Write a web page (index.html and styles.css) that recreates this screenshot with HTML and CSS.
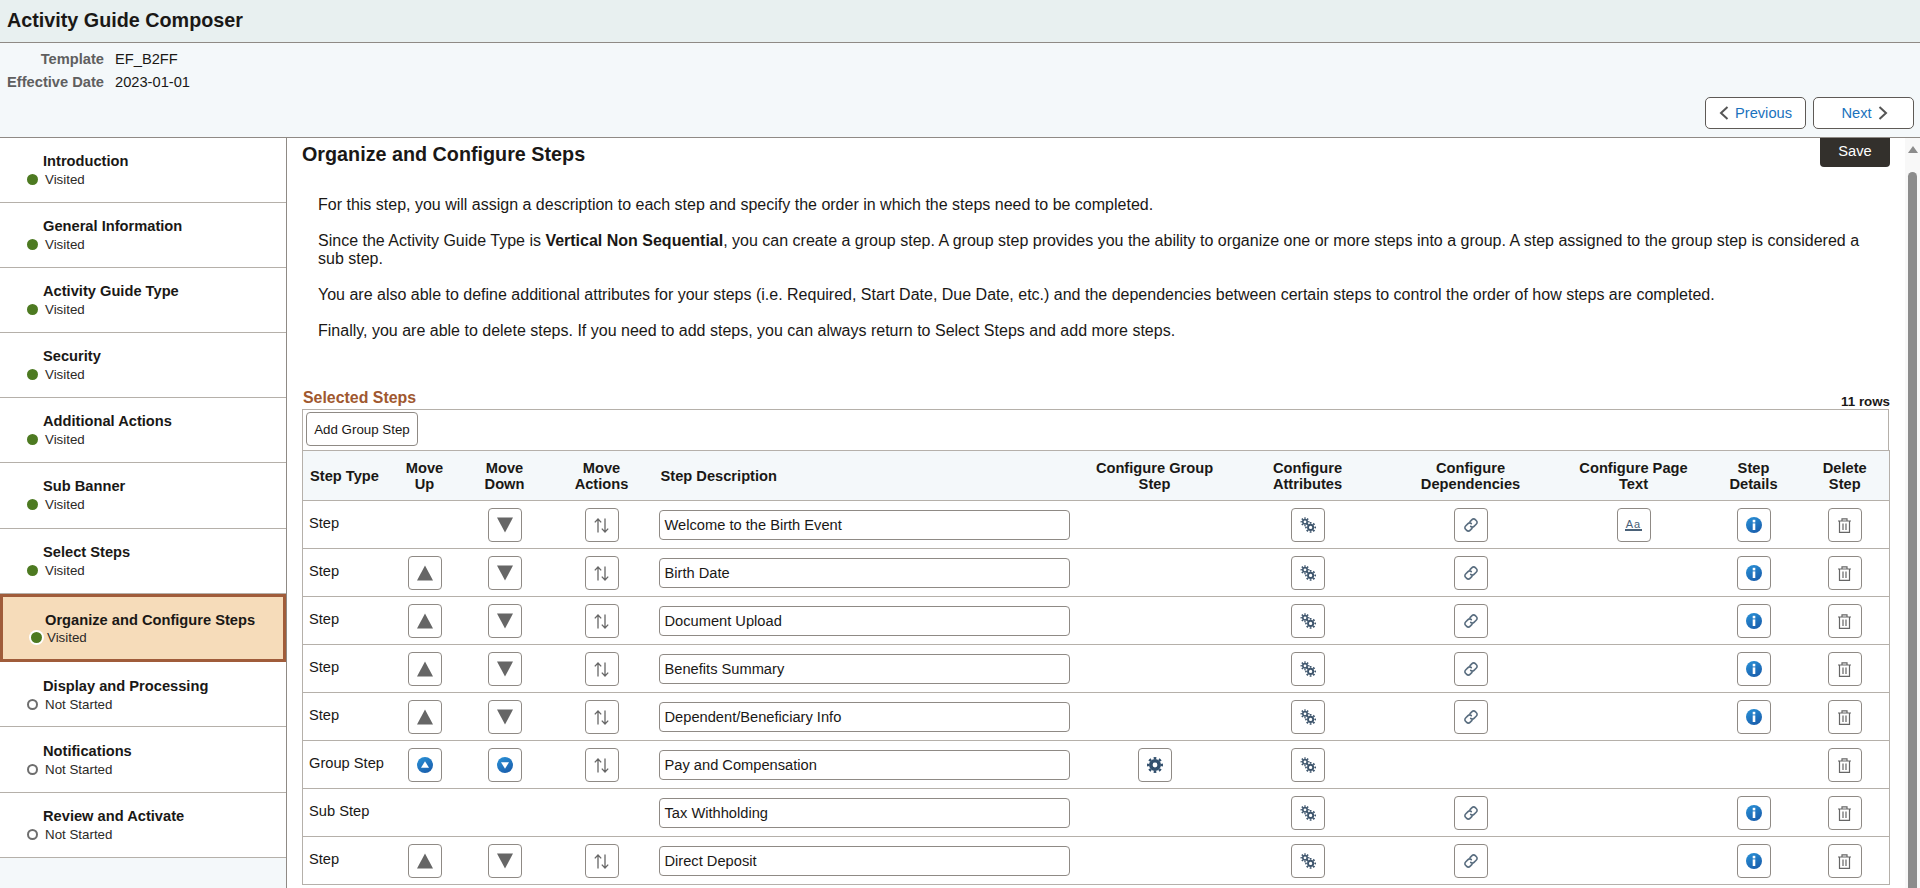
FILE: index.html
```html
<!DOCTYPE html>
<html lang="en">
<head>
<meta charset="utf-8">
<title>Activity Guide Composer</title>
<link rel="stylesheet" href="styles.css">
</head>
<body>
<svg class="sprite" aria-hidden="true">
  <defs>
    <linearGradient id="blue" x1="0" y1="0" x2="0.6" y2="1"><stop offset="0" stop-color="#2a93d8"/><stop offset="1" stop-color="#1a60ae"/></linearGradient>
    <symbol id="tri-up" viewBox="0 0 16 16"><path d="M8 .5 16 15.5H0z" fill="#666"/></symbol>
    <symbol id="tri-down" viewBox="0 0 16 16"><path d="M0 .5H16L8 15.5z" fill="#666"/></symbol>
    <symbol id="swap" viewBox="0 0 15 15"><path d="M4 14.5V1M.8 4.4 4 1l3.2 3.4M11 .5V14M7.8 10.6 11 14l3.2-3.4" fill="none" stroke="#666" stroke-width="1.3"/></symbol>
    <symbol id="gears" viewBox="0 0 16 16">
      <g fill="none" stroke="#3f566d"><circle cx="5" cy="4.8" r="2.2" stroke-width="1.6"/><circle cx="5" cy="4.8" r="3.7" stroke-width="1.5" pathLength="16" stroke-dasharray="1 1" stroke-dashoffset=".5"/>
      <circle cx="10.6" cy="10.4" r="2.6" stroke-width="1.9"/><circle cx="10.6" cy="10.4" r="4.6" stroke-width="1.7" pathLength="16" stroke-dasharray="1 1" stroke-dashoffset=".5"/></g>
    </symbol>
    <symbol id="gear" viewBox="0 0 16 16">
      <g fill="none" stroke="#33506e"><circle cx="8" cy="8" r="4.2" stroke-width="3.6"/><circle cx="8" cy="8" r="6.9" stroke-width="2.2" pathLength="16" stroke-dasharray="1 1" stroke-dashoffset=".5"/></g>
    </symbol>
    <symbol id="link" viewBox="0 0 14 14">
      <g fill="none" stroke="#5a6e80" stroke-width="1.6" stroke-linecap="round"><path d="M6 3.6 8 1.6a2.3 2.3 0 0 1 3.3 0l1.1 1.1a2.3 2.3 0 0 1 0 3.3L10 8.4a2.3 2.3 0 0 1-3.3 0"/><path d="M8 10.4 6 12.4a2.3 2.3 0 0 1-3.3 0L1.6 11.3a2.3 2.3 0 0 1 0-3.3L4 5.6a2.3 2.3 0 0 1 3.3 0"/></g>
    </symbol>
    <symbol id="info" viewBox="0 0 16 16"><circle cx="8" cy="8" r="8" fill="url(#blue)"/><rect x="6.7" y="2.8" width="2.6" height="2.6" fill="#fff"/><rect x="6.7" y="6.4" width="2.6" height="6.6" fill="#fff"/></symbol>
    <symbol id="trash" viewBox="0 0 14 15">
      <g fill="none" stroke="#666" stroke-width="1.2"><path d="M.5 3H13.5M4.5 3V.8H9.5V3M2 3V14.4H12V3M5.5 5.5V12M8.5 5.5V12"/></g>
    </symbol>
    <symbol id="group-up" viewBox="0 0 16 16"><circle cx="8" cy="8" r="8" fill="url(#blue)"/><path d="M8 4.2 12 10.8H4z" fill="#fff"/></symbol>
    <symbol id="group-down" viewBox="0 0 16 16"><circle cx="8" cy="8" r="8" fill="url(#blue)"/><path d="M4 5.2H12L8 11.8z" fill="#fff"/></symbol>
    <symbol id="prev" viewBox="0 0 10 14"><path d="M8.5 1 2 7l6.5 6" fill="none" stroke="#555" stroke-width="2"/></symbol>
    <symbol id="next" viewBox="0 0 10 14"><path d="M1.5 1 8 7l-6.5 6" fill="none" stroke="#555" stroke-width="2"/></symbol>
  </defs>
</svg>

<header class="title-bar"><h1>Activity Guide Composer</h1></header>

<section class="context">
  <dl class="facts">
    <dt>Template</dt><dd>EF_B2FF</dd>
    <dt>Effective Date</dt><dd>2023-01-01</dd>
  </dl>
  <div class="pager">
    <button class="pager-btn"><svg class="pager-icon"><use href="#prev"/></svg>Previous</button>
    <button class="pager-btn"><span class="next-label">Next</span><svg class="pager-icon"><use href="#next"/></svg></button>
  </div>
</section>

<div class="workspace">
  <nav class="steps-nav">
    <a class="nav-item"><span class="nav-title">Introduction</span><span class="nav-status"><i class="dot"></i>Visited</span></a>
    <a class="nav-item"><span class="nav-title">General Information</span><span class="nav-status"><i class="dot"></i>Visited</span></a>
    <a class="nav-item"><span class="nav-title">Activity Guide Type</span><span class="nav-status"><i class="dot"></i>Visited</span></a>
    <a class="nav-item"><span class="nav-title">Security</span><span class="nav-status"><i class="dot"></i>Visited</span></a>
    <a class="nav-item"><span class="nav-title">Additional Actions</span><span class="nav-status"><i class="dot"></i>Visited</span></a>
    <a class="nav-item"><span class="nav-title">Sub Banner</span><span class="nav-status"><i class="dot"></i>Visited</span></a>
    <a class="nav-item"><span class="nav-title">Select Steps</span><span class="nav-status"><i class="dot"></i>Visited</span></a>
    <a class="nav-item is-current"><span class="nav-title">Organize and Configure Steps</span><span class="nav-status"><i class="dot"></i>Visited</span></a>
    <a class="nav-item lower"><span class="nav-title">Display and Processing</span><span class="nav-status"><i class="dot dot-open"></i>Not Started</span></a>
    <a class="nav-item lower"><span class="nav-title">Notifications</span><span class="nav-status"><i class="dot dot-open"></i>Not Started</span></a>
    <a class="nav-item"><span class="nav-title">Review and Activate</span><span class="nav-status"><i class="dot dot-open"></i>Not Started</span></a>
  </nav>

  <main class="content">
    <div class="content-head">
      <h2>Organize and Configure Steps</h2>
      <button class="save">Save</button>
    </div>
    <div class="intro">
      <p>For this step, you will assign a description to each step and specify the order in which the steps need to be completed.</p>
      <p>Since the Activity Guide Type is <b>Vertical Non Sequential</b>, you can create a group step. A group step provides you the ability to organize one or more steps into a group. A step assigned to the group step is considered a sub step.</p>
      <p>You are also able to define additional attributes for your steps (i.e. Required, Start Date, Due Date, etc.) and the dependencies between certain steps to control the order of how steps are completed.</p>
      <p>Finally, you are able to delete steps. If you need to add steps, you can always return to Select Steps and add more steps.</p>
    </div>
    <div class="grid-head"><h3>Selected Steps</h3><span class="row-count">11 rows</span></div>
    <div class="toolbar"><button class="add-btn">Add Group Step</button></div>
    <table class="steps">
      <colgroup><col class="c-type"><col class="c-up"><col class="c-down"><col class="c-act"><col class="c-desc"><col class="c-grp"><col class="c-attr"><col class="c-dep"><col class="c-text"><col class="c-det"><col class="c-del"></colgroup>
      <thead>
        <tr><th class="left">Step Type</th><th>Move<br>Up</th><th>Move<br>Down</th><th>Move<br>Actions</th><th class="left desc-head">Step Description</th><th>Configure Group<br>Step</th><th>Configure<br>Attributes</th><th>Configure<br>Dependencies</th><th>Configure Page<br>Text</th><th>Step<br>Details</th><th>Delete<br>Step</th></tr>
      </thead>
      <tbody>
        <tr><td class="type">Step</td><td></td><td><a class="ib"><svg class="i16"><use href="#tri-down"/></svg></a></td><td><a class="ib"><svg class="i15"><use href="#swap"/></svg></a></td><td><div class="field">Welcome to the Birth Event</div></td><td></td><td><a class="ib"><svg class="i16"><use href="#gears"/></svg></a></td><td><a class="ib"><svg class="i14"><use href="#link"/></svg></a></td><td><a class="ib"><span class="aa">Aa</span></a></td><td><a class="ib"><svg class="i16"><use href="#info"/></svg></a></td><td><a class="ib"><svg class="i15"><use href="#trash"/></svg></a></td></tr>
        <tr><td class="type">Step</td><td><a class="ib"><svg class="i16"><use href="#tri-up"/></svg></a></td><td><a class="ib"><svg class="i16"><use href="#tri-down"/></svg></a></td><td><a class="ib"><svg class="i15"><use href="#swap"/></svg></a></td><td><div class="field">Birth Date</div></td><td></td><td><a class="ib"><svg class="i16"><use href="#gears"/></svg></a></td><td><a class="ib"><svg class="i14"><use href="#link"/></svg></a></td><td></td><td><a class="ib"><svg class="i16"><use href="#info"/></svg></a></td><td><a class="ib"><svg class="i15"><use href="#trash"/></svg></a></td></tr>
        <tr><td class="type">Step</td><td><a class="ib"><svg class="i16"><use href="#tri-up"/></svg></a></td><td><a class="ib"><svg class="i16"><use href="#tri-down"/></svg></a></td><td><a class="ib"><svg class="i15"><use href="#swap"/></svg></a></td><td><div class="field">Document Upload</div></td><td></td><td><a class="ib"><svg class="i16"><use href="#gears"/></svg></a></td><td><a class="ib"><svg class="i14"><use href="#link"/></svg></a></td><td></td><td><a class="ib"><svg class="i16"><use href="#info"/></svg></a></td><td><a class="ib"><svg class="i15"><use href="#trash"/></svg></a></td></tr>
        <tr><td class="type">Step</td><td><a class="ib"><svg class="i16"><use href="#tri-up"/></svg></a></td><td><a class="ib"><svg class="i16"><use href="#tri-down"/></svg></a></td><td><a class="ib"><svg class="i15"><use href="#swap"/></svg></a></td><td><div class="field">Benefits Summary</div></td><td></td><td><a class="ib"><svg class="i16"><use href="#gears"/></svg></a></td><td><a class="ib"><svg class="i14"><use href="#link"/></svg></a></td><td></td><td><a class="ib"><svg class="i16"><use href="#info"/></svg></a></td><td><a class="ib"><svg class="i15"><use href="#trash"/></svg></a></td></tr>
        <tr><td class="type">Step</td><td><a class="ib"><svg class="i16"><use href="#tri-up"/></svg></a></td><td><a class="ib"><svg class="i16"><use href="#tri-down"/></svg></a></td><td><a class="ib"><svg class="i15"><use href="#swap"/></svg></a></td><td><div class="field">Dependent/Beneficiary Info</div></td><td></td><td><a class="ib"><svg class="i16"><use href="#gears"/></svg></a></td><td><a class="ib"><svg class="i14"><use href="#link"/></svg></a></td><td></td><td><a class="ib"><svg class="i16"><use href="#info"/></svg></a></td><td><a class="ib"><svg class="i15"><use href="#trash"/></svg></a></td></tr>
        <tr><td class="type">Group Step</td><td><a class="ib"><svg class="i16"><use href="#group-up"/></svg></a></td><td><a class="ib"><svg class="i16"><use href="#group-down"/></svg></a></td><td><a class="ib"><svg class="i15"><use href="#swap"/></svg></a></td><td><div class="field">Pay and Compensation</div></td><td><a class="ib"><svg class="i16"><use href="#gear"/></svg></a></td><td><a class="ib"><svg class="i16"><use href="#gears"/></svg></a></td><td></td><td></td><td></td><td><a class="ib"><svg class="i15"><use href="#trash"/></svg></a></td></tr>
        <tr><td class="type">Sub Step</td><td></td><td></td><td></td><td><div class="field">Tax Withholding</div></td><td></td><td><a class="ib"><svg class="i16"><use href="#gears"/></svg></a></td><td><a class="ib"><svg class="i14"><use href="#link"/></svg></a></td><td></td><td><a class="ib"><svg class="i16"><use href="#info"/></svg></a></td><td><a class="ib"><svg class="i15"><use href="#trash"/></svg></a></td></tr>
        <tr><td class="type">Step</td><td><a class="ib"><svg class="i16"><use href="#tri-up"/></svg></a></td><td><a class="ib"><svg class="i16"><use href="#tri-down"/></svg></a></td><td><a class="ib"><svg class="i15"><use href="#swap"/></svg></a></td><td><div class="field">Direct Deposit</div></td><td></td><td><a class="ib"><svg class="i16"><use href="#gears"/></svg></a></td><td><a class="ib"><svg class="i14"><use href="#link"/></svg></a></td><td></td><td><a class="ib"><svg class="i16"><use href="#info"/></svg></a></td><td><a class="ib"><svg class="i15"><use href="#trash"/></svg></a></td></tr>
      </tbody>
    </table>
  </main>

  <div class="scrollbar"><span class="scroll-up"></span><span class="scroll-thumb"></span></div>
</div>
</body>
</html>
```

FILE: styles.css
```css
* { box-sizing: border-box; }
html, body { height: 100%; }
body {
  margin: 0;
  height: 888px;
  overflow: hidden;
  display: flex;
  flex-direction: column;
  background: #fff;
  color: #1a1816;
  font: 14.67px/16px "Liberation Sans", Arial, sans-serif;
}
.sprite { position: absolute; width: 0; height: 0; }

.title-bar {
  height: 43px;
  flex: none;
  padding: 9px 7px 0;
  background: #e8f0f0;
  border-bottom: 1px solid #8f8a85;
}
h1 { margin: 0; font-size: 19.75px; line-height: 22px; font-weight: 700; }

.context {
  height: 95px;
  flex: none;
  position: relative;
  background: #f4f8fa;
  border-bottom: 1px solid #8f8a85;
}
.facts {
  margin: 0;
  padding-top: 8px;
  display: grid;
  grid-template-columns: 104px auto;
  column-gap: 11px;
  row-gap: 7px;
  justify-content: start;
}
.facts dt { font-weight: 700; color: #5f5f5f; text-align: right; }
.facts dd { margin: 0; }

.pager { position: absolute; right: 6px; top: 54px; display: flex; gap: 7px; }
.pager-btn {
  width: 101px;
  height: 32px;
  display: flex;
  align-items: center;
  justify-content: center;
  gap: 6px;
  background: #fff;
  border: 1px solid #5e5a56;
  border-radius: 5px;
  color: #1a72bd;
  font: 14.67px "Liberation Sans", Arial, sans-serif;
}
.next-label { margin-left: 2px; }
.pager-icon { width: 10px; height: 14px; }

.workspace { flex: 1; min-height: 0; display: flex; }

.steps-nav {
  width: 287px;
  flex: none;
  background: #f4f8fa;
  border-right: 1px solid #8f8a85;
}
.nav-item {
  display: block;
  height: 65.1px;
  padding: 15px 0 0 43px;
  background: #fff;
  border-bottom: 1px solid #b5b0aa;
}
.nav-item.lower { padding-top: 16px; }
.nav-title { display: block; font-weight: 700; line-height: 17px; }
.nav-status { display: block; position: relative; margin-top: 2px; padding-left: 2px; font-size: 13.33px; line-height: 15px; color: #2b2926; }
.dot {
  position: absolute;
  left: -16px;
  top: 2px;
  width: 11px;
  height: 11px;
  border-radius: 50%;
  background: #4d7a21;
}
.dot-open { background: #fff; border: 2px solid #6e6e6e; }
.is-current {
  height: 68.7px;
  padding: 15px 0 0 42px;
  background: #f6dcba;
  border: 3px solid #a05c3a;
}
.is-current .nav-status { margin-top: 1px; }
.is-current .dot { box-shadow: 0 0 0 2px #fff; left: -14px; }

.content { flex: 1; min-width: 0; padding: 0 16px 0 15px; overflow: hidden; }
.content-head { display: flex; justify-content: space-between; align-items: flex-start; height: 29px; margin-right: -1px; }
h2 { margin: 5px 0 0; font-size: 19.75px; line-height: 23px; font-weight: 700; }
.save {
  width: 70px;
  height: 29px;
  padding: 0 0 4px;
  border: 0;
  border-radius: 0 0 4px 4px;
  background: #33302c;
  color: #fff;
  font: 14.67px "Liberation Sans", Arial, sans-serif;
}
.intro { padding: 29px 20px 0 16px; font-size: 16px; line-height: 18px; height: 217px; }
.intro p { margin: 0 0 18px; }

.grid-head { display: flex; justify-content: space-between; align-items: flex-end; height: 20px; margin-top: 5px; padding-left: 1px; margin-right: -1px; }
h3 { margin: 0 0 2px; font-size: 15.9px; line-height: 18px; font-weight: 700; color: #a0582f; }
.row-count { font-size: 13.33px; font-weight: 700; line-height: 14px; }

.toolbar {
  height: 41px;
  padding: 2px 3px 0;
  border: 1px solid #b5b0aa;
  border-bottom: 0;
}
.add-btn {
  width: 112px;
  height: 34px;
  padding: 0;
  background: #fff;
  border: 1px solid #8f8a85;
  border-radius: 4px;
  color: #1a1816;
  font: 13.33px "Liberation Sans", Arial, sans-serif;
}

.steps { width: 100%; table-layout: fixed; border-collapse: collapse; border: 1px solid #b5b0aa; }
.c-type { width: 82px; } .c-up { width: 80px; } .c-down { width: 80px; } .c-act { width: 114px; }
.c-desc { width: 416px; } .c-grp { width: 160px; } .c-attr { width: 146px; } .c-dep { width: 180px; }
.c-text { width: 146px; } .c-det { width: 94px; } .c-del { width: 89px; }
.steps th {
  height: 50px;
  padding: 0;
  background: #f4f8fa;
  border-top: 1px solid #b5b0aa;
  border-bottom: 1px solid #b5b0aa;
  font-weight: 700;
  text-align: center;
  vertical-align: middle;
}
.steps th.left { text-align: left; padding-left: 7px; }
.steps th.desc-head { padding-left: 2px; }
.steps td {
  height: 48px;
  padding: 7px 0 0;
  border-bottom: 1px solid #b5b0aa;
  text-align: center;
  vertical-align: top;
}
.steps td.type { text-align: left; padding: 14px 0 0 6px; }
.ib {
  display: inline-flex;
  width: 34px;
  height: 34px;
  align-items: center;
  justify-content: center;
  vertical-align: top;
  background: #fff;
  border: 1px solid #8f8a85;
  border-radius: 4px;
}
.i16 { width: 16px; height: 16px; }
.i15 { width: 15px; height: 15px; }
.i14 { width: 14px; height: 14px; }
.aa {
  width: 17px;
  border-bottom: 2px solid #4a6178;
  color: #4a6178;
  font-size: 11px;
  line-height: 10px;
  letter-spacing: 1px;
}
.field {
  width: 411px;
  height: 30px;
  margin: 2px 0 0;
  padding: 0 5px;
  background: #fff;
  border: 1px solid #8f8a85;
  border-radius: 4px;
  text-align: left;
  line-height: 28px;
}

.scrollbar {
  width: 15px;
  flex: none;
  display: flex;
  flex-direction: column;
  align-items: center;
  background: #f8f8f8;
}
.scroll-up {
  margin-top: 8px;
  width: 0;
  height: 0;
  border-left: 5px solid transparent;
  border-right: 5px solid transparent;
  border-bottom: 7px solid #8c8c8c;
}
.scroll-thumb { width: 9px; flex: 1; margin-top: 19px; border-radius: 5px 5px 0 0; background: #8c8c8c; }
```
